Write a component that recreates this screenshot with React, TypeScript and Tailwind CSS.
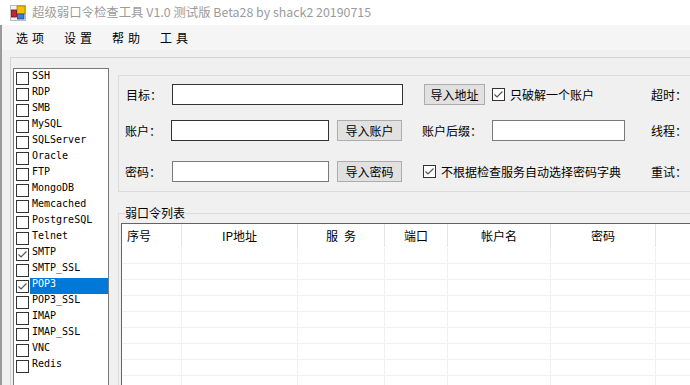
import React from 'react';

const services = [
  'SSH', 'RDP', 'SMB', 'MySQL', 'SQLServer', 'Oracle', 'FTP', 'MongoDB', 'Memcached',
  'PostgreSQL', 'Telnet', 'SMTP', 'SMTP_SSL', 'POP3', 'POP3_SSL', 'IMAP', 'IMAP_SSL', 'VNC', 'Redis',
];
const checked = ['SMTP', 'POP3'];

const columns = [
  { title: '序号', w: 'w-[60px]', left: true },
  { title: 'IP地址', w: 'w-[116px]' },
  { title: '服\u2002务', w: 'w-[87px]' },
  { title: '端口', w: 'w-[63px]' },
  { title: '帐户名', w: 'w-[103px]' },
  { title: '密码', w: 'w-[105px]' },
  { title: '', w: 'w-[120px]' },
];

const cjk = '"Noto Sans CJK SC", "Noto Sans", sans-serif';

function Box({ on }: { on: boolean }) {
  return (
    <span className="w-[13px] h-[13px] shrink-0 border border-[#333] bg-white flex items-center justify-center">
      {on && (
        <svg width="11" height="11" viewBox="0 0 11 11">
          <polyline points="1.5,5.5 4,8 9.5,2.5" fill="none" stroke="#555" strokeWidth="1.2" />
        </svg>
      )}
    </span>
  );
}

function Button({ children, w }: { children: React.ReactNode; w: string }) {
  return (
    <div className={`${w} h-[21px] bg-[#e1e1e1] border border-[#adadad] flex items-center justify-center text-[12px]`}>
      {children}
    </div>
  );
}

function AppIcon() {
  return (
    <svg width="16" height="16" viewBox="0 0 16 16">
      <rect x="0.5" y="0.5" width="15" height="15" fill="#f4f4f4" stroke="#bdbdbd" />
      <rect x="7" y="1" width="8" height="8" fill="#f2c200" stroke="#b07a00" strokeWidth="0.8" />
      <rect x="1.5" y="5" width="5" height="7" fill="#c8282d" stroke="#6a1010" strokeWidth="0.8" />
      <rect x="7.5" y="9" width="6.5" height="5" fill="#3b7ddb" stroke="#1a4a9a" strokeWidth="0.8" />
    </svg>
  );
}

export default function App() {
  return (
    <div
      className="relative w-[690px] h-[385px] overflow-hidden bg-[#f0f0f0] flex flex-col text-black"
      style={{ fontFamily: cjk }}
    >
      <div className="absolute left-0 top-[25px] bottom-0 w-[2px] bg-[#9a9a9a]" />

      <div className="h-[25px] shrink-0 bg-white flex items-center">
        <div className="ml-[10px]">
          <AppIcon />
        </div>
        <span className="ml-[6px] text-[12.4px] text-[#9b9b9b] whitespace-nowrap">
          超级弱口令检查工具 V1.0 测试版 Beta28 by shack2 20190715
        </span>
      </div>

      <div className="h-[25px] shrink-0 bg-[#f5f5f5] flex items-center pl-[16px] text-[12px]">
        {['选项', '设置', '帮助', '工具'].map(m => (
          <span key={m} className="w-[48px] tracking-[4px]">{m}</span>
        ))}
      </div>

      <div className="mt-[7px] ml-[10px] flex-1 flex border-t border-l border-[#d5d5d5]">
        <div className="mt-[10px] ml-[2px] w-[96px] shrink-0 border border-[#7a7a7a] bg-white pt-[1px]">
          {services.map(s => {
            const sel = s === 'POP3';
            return (
              <div key={s} className="h-[16px] flex items-start">
                <span className="ml-[2px] mt-[2px]">
                  <Box on={checked.includes(s)} />
                </span>
                <span
                  className={`ml-[1px] pl-[2px] flex-1 h-[16px] leading-[12px] text-[10px] whitespace-nowrap ${sel ? 'bg-[#0078d7] text-white' : ''}`}
                  style={{ fontFamily: '"DejaVu Sans Mono", monospace' }}
                >
                  {s}
                </span>
              </div>
            );
          })}
        </div>

        <div className="ml-[9px] mt-[17px] flex flex-col w-[720px] shrink-0">
          <div className="h-[117px] border border-[#dcdcdc] pt-[8px] text-[12px] whitespace-nowrap">
            <div className="h-[21px] flex items-center pl-[7px]">
              <span className="w-[46px]">目标：</span>
              <div className="w-[231px] h-[21px] border border-[#333] bg-white" />
              <div className="ml-[21px]">
                <Button w="w-[61px]">导入地址</Button>
              </div>
              <div className="ml-[7px] w-[159px] flex items-center">
                <Box on />
                <span className="ml-[5px]">只破解一个账户</span>
              </div>
              <span>超时：</span>
            </div>

            <div className="mt-[15px] h-[21px] flex items-center pl-[6px]">
              <span className="w-[46px]">账户：</span>
              <div className="w-[158px] h-[21px] border border-[#333] bg-white" />
              <div className="ml-[8px]">
                <Button w="w-[65px]">导入账户</Button>
              </div>
              <span className="ml-[20px] w-[70px]">账户后缀：</span>
              <div className="w-[133px] h-[21px] border border-[#7a7a7a] bg-white" />
              <span className="ml-[26px]">线程：</span>
            </div>

            <div className="mt-[20px] h-[21px] flex items-center pl-[6px]">
              <span className="w-[47px]">密码：</span>
              <div className="w-[157px] h-[21px] border border-[#7a7a7a] bg-white" />
              <div className="ml-[8px]">
                <Button w="w-[65px]">导入密码</Button>
              </div>
              <div className="ml-[21px] w-[228px] flex items-center">
                <Box on />
                <span className="ml-[5px]">不根据检查服务自动选择密码字典</span>
              </div>
              <span>重试：</span>
            </div>
          </div>

          <fieldset className="mt-[13px] flex-1 border border-[#dcdcdc]">
            <legend className="ml-[6px] text-[12px] leading-[16px]">弱口令列表</legend>
            <div className="mt-[2px] ml-[2px] h-[200px] border-t border-l border-[#646464] bg-white text-[12px]">
              <div className="h-[24px] flex">
                {columns.map((c, i) => (
                  <div
                    key={i}
                    className={`${c.w} shrink-0 h-[23px] flex items-center border-r border-[#e5e5e5] whitespace-nowrap ${c.left ? 'pl-[5px]' : 'justify-center'}`}
                  >
                    {c.title}
                  </div>
                ))}
              </div>
              {Array.from({ length: 9 }).map((_, r) => (
                <div key={r} className="h-[16px] flex border-b border-[#f0f0f0]">
                  {columns.map((c, i) => (
                    <div key={i} className={`${c.w} shrink-0 border-r border-[#f0f0f0]`} />
                  ))}
                </div>
              ))}
            </div>
          </fieldset>
        </div>
      </div>
    </div>
  );
}
